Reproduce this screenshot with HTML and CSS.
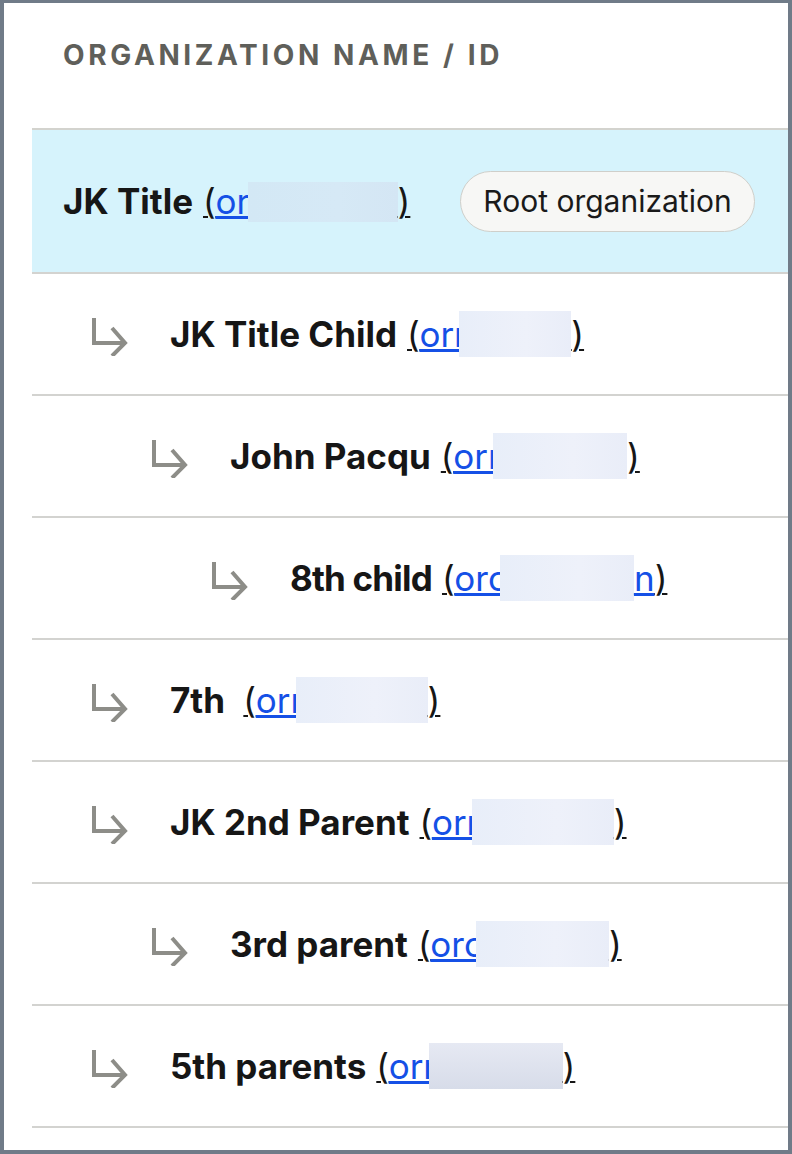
FILE: index.html
```html
<!DOCTYPE html>
<html lang="en">
<head>
    <meta charset="UTF-8">
    <meta name="viewport" content="width=device-width, initial-scale=1.0">
    <title>Organizations</title>
    <link rel="stylesheet" href="styles.css">
</head>
<body>

<div class="frame">
    <div class="org-table">
        <div class="org-head">ORGANIZATION NAME / ID</div>

        <div class="org-row root">
            <span class="org-name">JK Title</span>
            <span class="org-id">(<a href="#">or<span class="redact" style="width: 150px;"></span></a>)</span>
            <span class="badge">Root organization</span>
        </div>

        <div class="org-row level-1">
            <svg class="branch" viewBox="0 0 40 40"><path d="M4 2V27H35M22 12L35 27L22 40"/></svg>
            <span class="org-name">JK Title Child</span>
            <span class="org-id">(<a href="#">orr<span class="redact" style="width: 112px;"></span></a>)</span>
        </div>

        <div class="org-row level-2">
            <svg class="branch" viewBox="0 0 40 40"><path d="M4 2V27H35M22 12L35 27L22 40"/></svg>
            <span class="org-name">John Pacqu</span>
            <span class="org-id">(<a href="#">orr<span class="redact" style="width: 134px;"></span></a>)</span>
        </div>

        <div class="org-row level-3">
            <svg class="branch" viewBox="0 0 40 40"><path d="M4 2V27H35M22 12L35 27L22 40"/></svg>
            <span class="org-name tight">8th child</span>
            <span class="org-id">(<a href="#">orc<span class="redact" style="width: 134px;"></span>n</a>)</span>
        </div>

        <div class="org-row level-1">
            <svg class="branch" viewBox="0 0 40 40"><path d="M4 2V27H35M22 12L35 27L22 40"/></svg>
            <span class="org-name">7th&nbsp;</span>
            <span class="org-id">(<a href="#">orr<span class="redact" style="width: 132px;"></span></a>)</span>
        </div>

        <div class="org-row level-1">
            <svg class="branch" viewBox="0 0 40 40"><path d="M4 2V27H35M22 12L35 27L22 40"/></svg>
            <span class="org-name">JK 2nd Parent</span>
            <span class="org-id">(<a href="#">orr<span class="redact" style="width: 142px;"></span></a>)</span>
        </div>

        <div class="org-row level-2">
            <svg class="branch" viewBox="0 0 40 40"><path d="M4 2V27H35M22 12L35 27L22 40"/></svg>
            <span class="org-name">3rd parent</span>
            <span class="org-id">(<a href="#">orc<span class="redact" style="width: 133px;"></span></a>)</span>
        </div>

        <div class="org-row level-1">
            <svg class="branch" viewBox="0 0 40 40"><path d="M4 2V27H35M22 12L35 27L22 40"/></svg>
            <span class="org-name">5th parents</span>
            <span class="org-id">(<a href="#">orr<span class="redact dark" style="width: 134px;"></span></a>)</span>
        </div>
    </div>
</div>

</body>
</html>
```

FILE: styles.css
```css
html, body {
    margin: 0;
    height: 100%;
}
body {
    background-color: #707b88;
    font-family: 'Inter', 'Liberation Sans', sans-serif;
    color: #161616;
    overflow: hidden;
}
.frame {
    margin: 3px 4px 0 4px;
    height: 1147px;
    background-color: white;
    overflow: hidden;
}
.org-table {
    margin-left: 28px;
}
.org-head {
    height: 127px;
    padding: 35px 0 0 31px;
    box-sizing: border-box;
    border-bottom: 2px solid #d3d3ce;
    font-size: 28px;
    line-height: 34px;
    font-weight: 700;
    letter-spacing: 3.6px;
    color: #5f5f5a;
}
.org-row {
    display: flex;
    align-items: center;
    height: 120px;
    padding-left: 31px;
    border-bottom: 2px solid #d3d3d0;
    font-size: 35px;
    white-space: nowrap;
}
.org-row.root {
    height: 142px;
    background-color: #d6f3fc;
}
.level-1 {
    padding-left: 58px;
}
.level-2 {
    padding-left: 118px;
}
.level-3 {
    padding-left: 178px;
}
.branch {
    width: 40px;
    height: 40px;
    margin: 4px 40px 0 0;
    fill: none;
    stroke: #8d8d88;
    stroke-width: 4;
    flex-shrink: 0;
}
.org-name {
    font-weight: 700;
    white-space: pre;
}
.org-name.tight {
    letter-spacing: -0.8px;
}
.org-id {
    margin-left: 10px;
    text-decoration: underline;
    text-decoration-thickness: 2px;
    text-underline-offset: 2px;
}
.org-id a {
    color: #1550e6;
    text-decoration-color: #1550e6;
}
.redact {
    display: inline-block;
    height: 46px;
    margin-left: -8px;
    vertical-align: -10px;
    background: linear-gradient(90deg, #e8eef9, #eef1fa 60%, #e9edf8);
}
.root .redact {
    height: 40px;
    margin-left: -2px;
    vertical-align: -8px;
    background: linear-gradient(90deg, #d3e8f5, #d6e9f6 60%, #d4e6f4);
}
.redact.dark {
    background: linear-gradient(180deg, #e6e9f3, #d7dce9);
}
.badge {
    margin-left: 50px;
    padding: 0 22px;
    height: 59px;
    line-height: 59px;
    border: 1.5px solid #cfcfca;
    border-radius: 31px;
    background-color: #f7f7f5;
    font-size: 30px;
    color: #1a1a1a;
}
```
